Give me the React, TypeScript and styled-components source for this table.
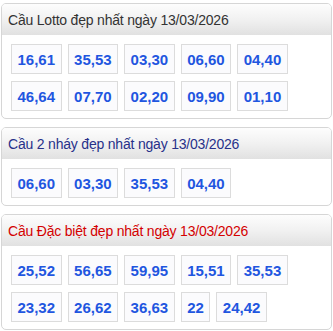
import styled, { createGlobalStyle } from "styled-components"

const GlobalStyle = createGlobalStyle`
  body {
    margin: 0;
    background: #fff;
    font-family: "Liberation Sans", Arial, sans-serif;
  }
`

type Tone = "gray" | "navy" | "red"

const toneColor: Record<Tone, string> = {
  gray: "#333333",
  navy: "#27318a",
  red: "#d40000",
}

const Page = styled.div`
  padding: 3px 1px 4px 1px;
  display: flex;
  flex-direction: column;
  gap: 8px;
`

const Panel = styled.section`
  border: 1px solid #d6d6d6;
  border-radius: 5px;
  overflow: hidden;
  background: #fff;
`

const Header = styled.h2<{ $tone: Tone }>`
  margin: 0;
  height: 31px;
  display: flex;
  align-items: center;
  padding: 0 6px;
  font-size: 14px;
  letter-spacing: -0.2px;
  font-weight: normal;
  color: ${(p) => toneColor[p.$tone]};
  background: linear-gradient(to bottom, #fdfdfd 0%, #f1f1f1 50%, #e1e1e1 100%);
`

const Body = styled.div`
  display: flex;
  flex-wrap: wrap;
  column-gap: 6px;
  row-gap: 7px;
  padding: 9px 9px 7px 9px;
`

const Num = styled.span`
  height: 30px;
  box-sizing: border-box;
  padding: 0 5.5px;
  display: flex;
  align-items: center;
  border: 1px solid #dcdcdc;
  background: #fbfbfd;
  color: #1f56e0;
  font-size: 15px;
  font-weight: bold;
`

const sections: { title: string; tone: Tone; nums: string[] }[] = [
  {
    title: "Cầu Lotto đẹp nhất ngày 13/03/2026",
    tone: "gray",
    nums: ["16,61", "35,53", "03,30", "06,60", "04,40", "46,64", "07,70", "02,20", "09,90", "01,10"],
  },
  {
    title: "Cầu 2 nháy đẹp nhất ngày 13/03/2026",
    tone: "navy",
    nums: ["06,60", "03,30", "35,53", "04,40"],
  },
  {
    title: "Cầu Đặc biệt đẹp nhất ngày 13/03/2026",
    tone: "red",
    nums: ["25,52", "56,65", "59,95", "15,51", "35,53", "23,32", "26,62", "36,63", "22", "24,42"],
  },
]

function App() {
  return (
    <>
      <GlobalStyle />
      <Page>
        {sections.map((s) => (
          <Panel key={s.title}>
            <Header $tone={s.tone}>{s.title}</Header>
            <Body>
              {s.nums.map((n, i) => (
                <Num key={i}>{n}</Num>
              ))}
            </Body>
          </Panel>
        ))}
      </Page>
    </>
  )
}

export default App
